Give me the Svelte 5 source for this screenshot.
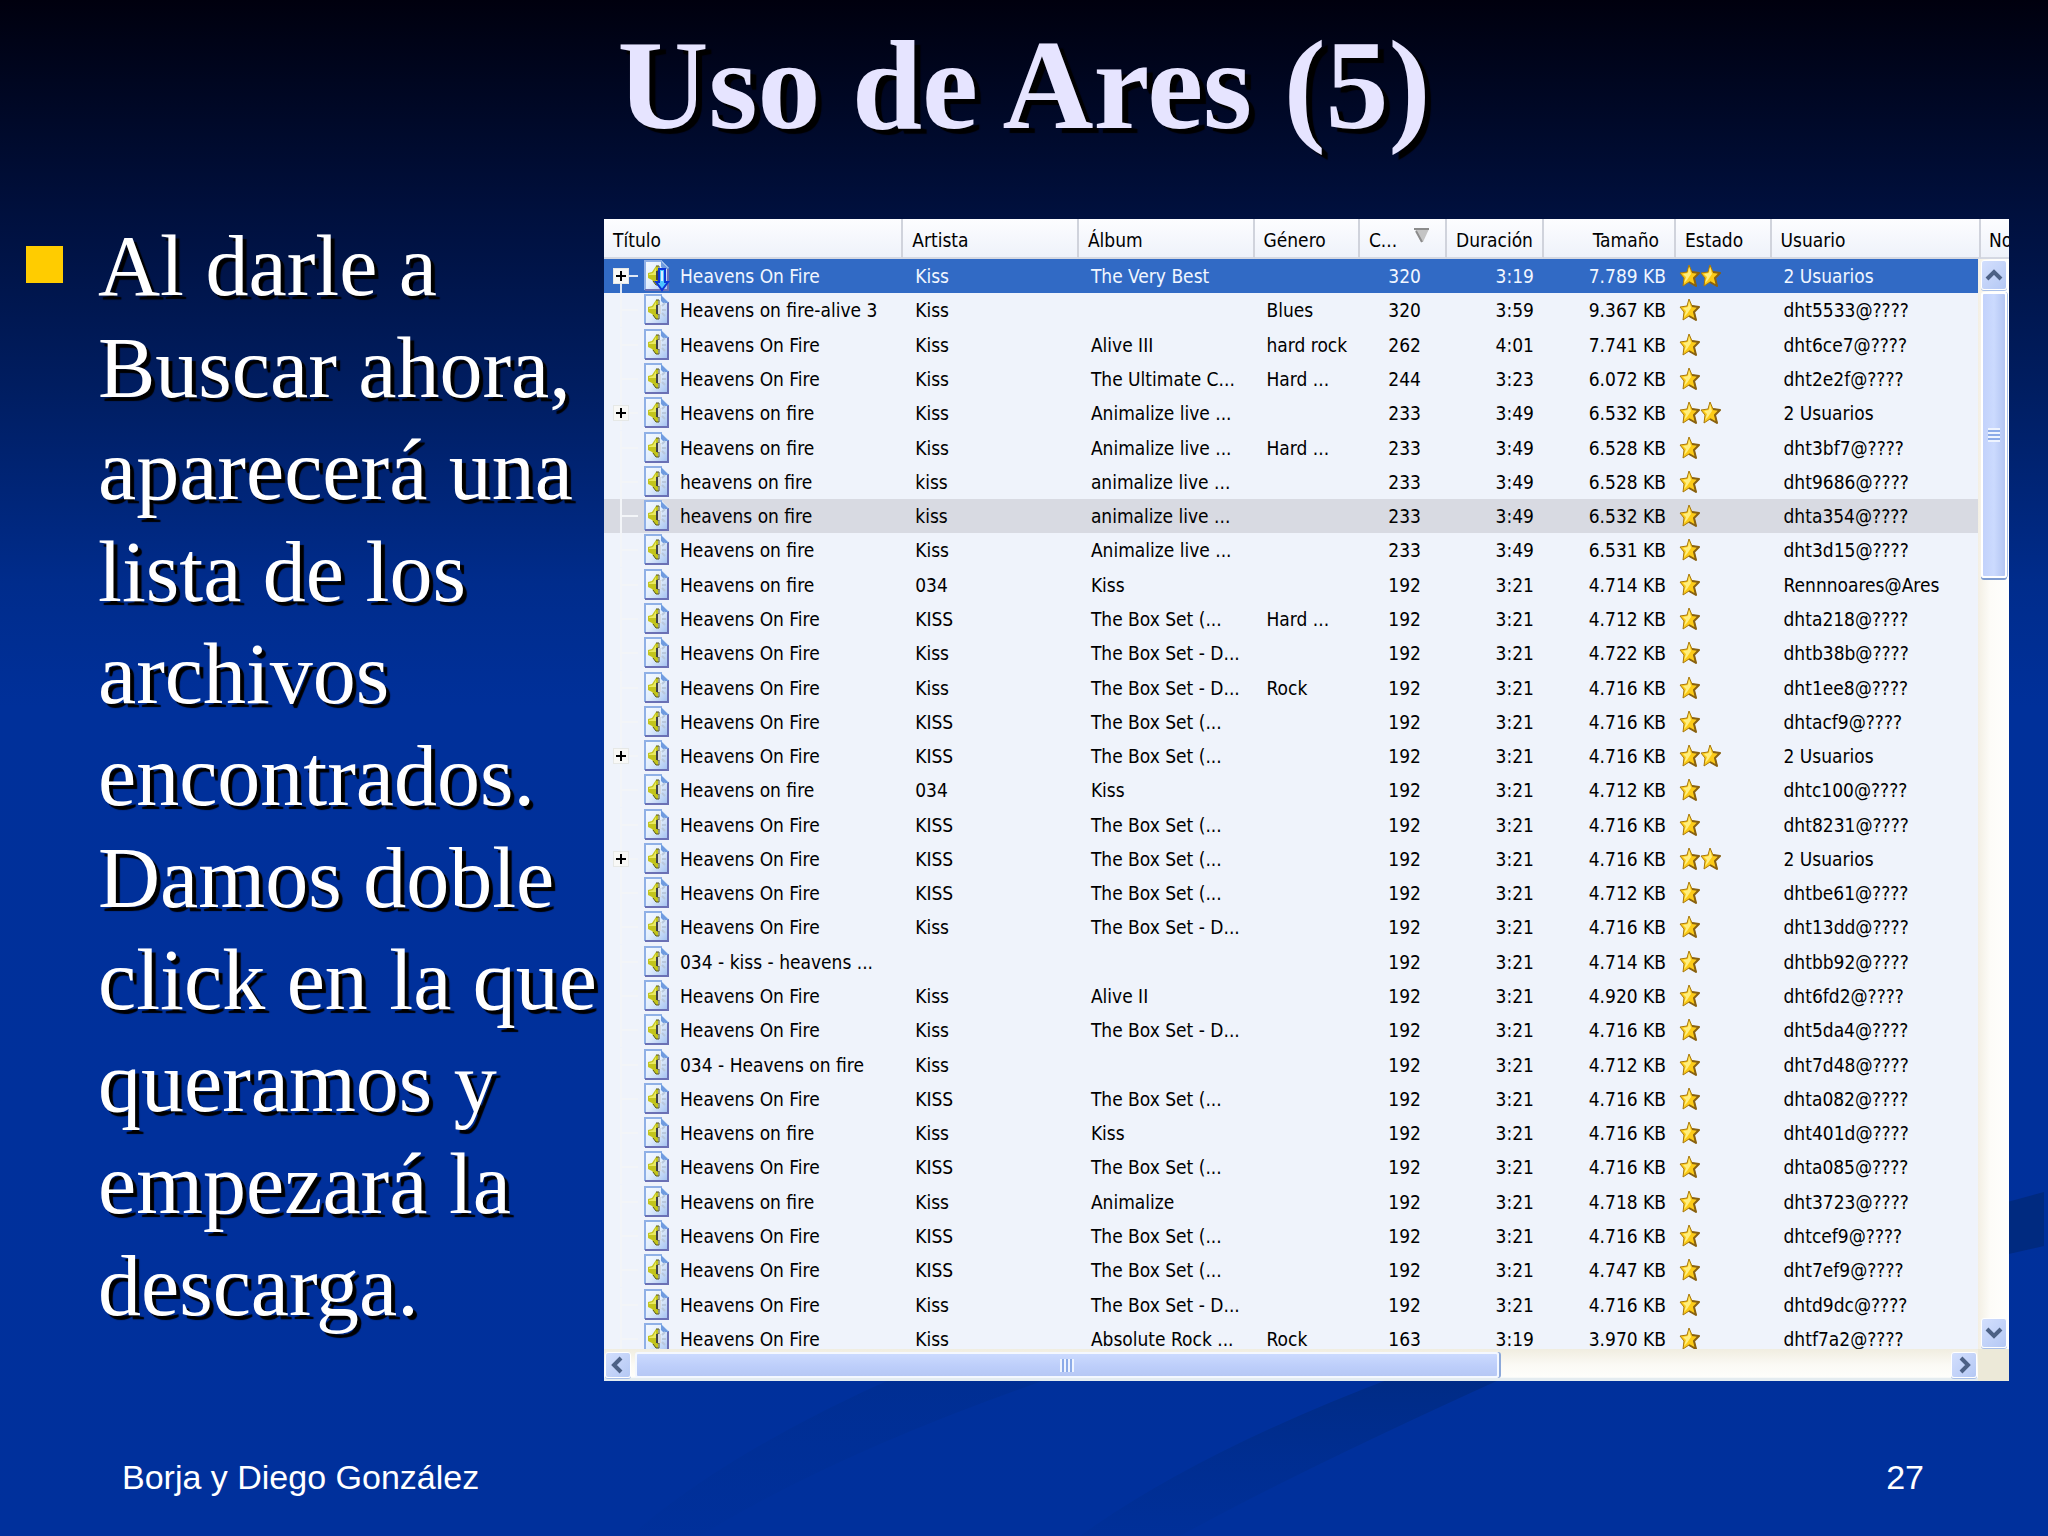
<script>
  const source = `+|Heavens On Fire|Kiss|The Very Best||320|3:19|7.789|2|2 Usuarios
|Heavens on fire-alive 3|Kiss||Blues|320|3:59|9.367|1|dht5533@????
|Heavens On Fire|Kiss|Alive III|hard rock|262|4:01|7.741|1|dht6ce7@????
|Heavens On Fire|Kiss|The Ultimate C...|Hard ...|244|3:23|6.072|1|dht2e2f@????
+|Heavens on fire|Kiss|Animalize live ...||233|3:49|6.532|2|2 Usuarios
|Heavens on fire|Kiss|Animalize live ...|Hard ...|233|3:49|6.528|1|dht3bf7@????
|heavens on fire|kiss|animalize live ...||233|3:49|6.528|1|dht9686@????
|heavens on fire|kiss|animalize live ...||233|3:49|6.532|1|dhta354@????
|Heavens on fire|Kiss|Animalize live ...||233|3:49|6.531|1|dht3d15@????
|Heavens on fire|034|Kiss||192|3:21|4.714|1|Rennnoares@Ares
|Heavens On Fire|KISS|The Box Set (...|Hard ...|192|3:21|4.712|1|dhta218@????
|Heavens On Fire|Kiss|The Box Set - D...||192|3:21|4.722|1|dhtb38b@????
|Heavens On Fire|Kiss|The Box Set - D...|Rock|192|3:21|4.716|1|dht1ee8@????
|Heavens On Fire|KISS|The Box Set (...||192|3:21|4.716|1|dhtacf9@????
+|Heavens On Fire|KISS|The Box Set (...||192|3:21|4.716|2|2 Usuarios
|Heavens on fire|034|Kiss||192|3:21|4.712|1|dhtc100@????
|Heavens On Fire|KISS|The Box Set (...||192|3:21|4.716|1|dht8231@????
+|Heavens On Fire|KISS|The Box Set (...||192|3:21|4.716|2|2 Usuarios
|Heavens On Fire|KISS|The Box Set (...||192|3:21|4.712|1|dhtbe61@????
|Heavens On Fire|Kiss|The Box Set - D...||192|3:21|4.716|1|dht13dd@????
|034 - kiss - heavens ...||||192|3:21|4.714|1|dhtbb92@????
|Heavens On Fire|Kiss|Alive II||192|3:21|4.920|1|dht6fd2@????
|Heavens On Fire|Kiss|The Box Set - D...||192|3:21|4.716|1|dht5da4@????
|034 - Heavens on fire|Kiss|||192|3:21|4.712|1|dht7d48@????
|Heavens On Fire|KISS|The Box Set (...||192|3:21|4.716|1|dhta082@????
|Heavens on fire|Kiss|Kiss||192|3:21|4.716|1|dht401d@????
|Heavens On Fire|KISS|The Box Set (...||192|3:21|4.716|1|dhta085@????
|Heavens on fire|Kiss|Animalize||192|3:21|4.718|1|dht3723@????
|Heavens On Fire|KISS|The Box Set (...||192|3:21|4.716|1|dhtcef9@????
|Heavens On Fire|KISS|The Box Set (...||192|3:21|4.747|1|dht7ef9@????
|Heavens On Fire|Kiss|The Box Set - D...||192|3:21|4.716|1|dhtd9dc@????
|Heavens On Fire|Kiss|Absolute Rock ...|Rock|163|3:19|3.970|1|dhtf7a2@????`;

  const rows = source.split('\n').map((line) => {
    const [node, title, artist, album, genre, quality, length, size, stars, user] = line.split('|');
    return { node, title, artist, album, genre, quality, length, size, stars: Number(stars), user };
  });
</script>

<main class="slide">
  <svg class="swoosh" viewBox="0 0 2048 1536" preserveAspectRatio="none" aria-hidden="true">
    <defs>
      <linearGradient id="fade" x1="0" y1="0" x2="0" y2="1">
        <stop offset="0" stop-color="#002a80" stop-opacity=".8" />
        <stop offset=".5" stop-color="#002a80" stop-opacity=".4" />
        <stop offset="1" stop-color="#002a80" stop-opacity=".1" />
      </linearGradient>
    </defs>
    <path d="M1400 1375 Q1200 1450 1080 1536 H1180 Q1300 1470 1510 1375 Z" fill="url(#fade)" />
    <path d="M900 1375 Q730 1450 630 1536 H700 Q840 1450 1060 1375 Z" fill="url(#fade)" opacity=".4" />
    <path d="M2000 1204 L2044 1192 V1246 L2000 1256 Z" fill="#002a80" />
  </svg>

  <h1>Uso de Ares (5)</h1>

  <div class="content">
    <ul class="points">
      <li>Al darle a Buscar ahora, aparecerá una lista de los archivos encontrados. Damos doble click en la que queramos y empezará la descarga.</li>
    </ul>

    <section class="panel" aria-label="Resultados">
      <div class="viewport">
        <table>
          <colgroup>
            <col class="w-title" /><col class="w-text" /><col class="w-text" /><col class="w-genre" />
            <col class="w-quality" /><col class="w-length" /><col class="w-size" /><col class="w-state" />
            <col /><col class="w-last" />
          </colgroup>
          <thead>
            <tr>
              <th>Título</th>
              <th>Artista</th>
              <th>Álbum</th>
              <th>Género</th>
              <th>
                <span class="sorted">C...
                  <svg width="16" height="16" viewBox="0 0 16 16" aria-hidden="true">
                    <path d="M1 1 H15 L9 14 H7 Z" fill="#c4c4c4" />
                    <path d="M0 1 H15 M2 3 L8 14" stroke="#8c8c8c" stroke-width="2" fill="none" />
                  </svg>
                </span>
              </th>
              <th>Duración</th>
              <th class="size">Tamaño</th>
              <th>Estado</th>
              <th>Usuario</th>
              <th>No</th>
            </tr>
          </thead>
          <tbody>
            {#each rows as row, i}
              <tr class:selected={i === 0} class:hovered={i === 7}>
                <td class="title">
                  <div class="entry">
                    <span class="tree">
                      {#if row.node}
                        <button class="expander" aria-label="Expandir">
                          <svg width="10" height="10" viewBox="0 0 10 10" aria-hidden="true">
                            <path d="M5 0 V10 M0 5 H10" stroke="#000" stroke-width="2" />
                          </svg>
                        </button>
                      {/if}
                    </span>
                    <svg class="file" width="26" height="32" viewBox="0 0 26 32" aria-hidden="true">
                      <defs>
                        <linearGradient id="page{i}" x1="0" y1="0" x2="1" y2="1">
                          <stop offset="0" stop-color="#f6faff" />
                          <stop offset=".5" stop-color="#e2eefc" />
                          <stop offset="1" stop-color="#9dbdf0" />
                        </linearGradient>
                      </defs>
                      <path d="M1 1 H18 L25 8 V30 H1 Z" fill="url(#page{i})" />
                      <path d="M1 30 V1 H18" stroke="#8fb0e6" stroke-width="2" fill="none" />
                      <path d="M24 8 V30 H1" stroke="#6a70b4" stroke-width="2" fill="none" />
                      <path d="M17 1 L25 9 H19 L17 7 Z" fill="#6f9be0" />
                      <path d="M4 13 L8 12 L12 6 H14 V25 H12 L8 20 L4 18 Z" fill="#c3c51c" />
                      <path d="M5 14 L9 13 L12 8 V15 H5 Z" fill="#e9ea62" />
                      <path d="M12 6 H15 V11 H13 V20 H15 V25 H12 L9 21" fill="none" stroke="#56571c" stroke-width="1" />
                      <path d="M12 11 H14 V20 H12 Z" fill="#3e4148" />
                      <path d="M14 11 H17 V20 H14 Z" fill="#d6d8de" />
                      <path d="M18 12 L21 9 M18 16 H22 M18 19 L21 22" stroke="#b9c8dc" stroke-width="2" />
                      {#if i === 0}
                        <path d="M15 9 H21 V22 H24 L18 30 L12 22 H15 Z" fill="#4cc2ff" stroke="#0b35d8" stroke-width="2" />
                        <path d="M17 11 H19 V21 H17 Z" fill="#d8ecff" />
                      {/if}
                    </svg>
                    <span>{row.title}</span>
                  </div>
                </td>
                <td>{row.artist}</td>
                <td>{row.album}</td>
                <td>{row.genre}</td>
                <td class="quality">{row.quality}</td>
                <td class="number">{row.length}</td>
                <td class="number">{row.size} KB</td>
                <td class="state">
                  <div class="stars">
                    {#each Array(row.stars) as _}
                      <svg width="21" height="24" viewBox="0 0 21 24" aria-hidden="true">
                        <path d="M10 1 L13 8 L20 9 L15 14 L17 22 L10 18 L4 22 L5 14 L1 9 L8 8 Z" fill="#fccb18" stroke="#a8780c" stroke-width="1" stroke-linejoin="round" />
                        <path d="M10 3 L12 10 L8 16 L5 19 L7 13 L4 10 L9 9 Z" fill="#ffee80" />
                        <path d="M13 8 L20 9 L15 14 L17 22 L10 18" fill="none" stroke="#8a6210" stroke-width="2" stroke-linejoin="round" />
                      </svg>
                    {/each}
                  </div>
                </td>
                <td>{row.user}</td>
                <td></td>
              </tr>
            {/each}
          </tbody>
        </table>
      </div>

      <div class="vbar">
        <button class="arrow" aria-label="Subir">
          <svg width="18" height="14" viewBox="0 0 18 14" aria-hidden="true"><path d="M2 11 L9 4 L16 11" fill="none" stroke="#4d6185" stroke-width="4" /></svg>
        </button>
        <div class="vthumb"><span class="grip"></span></div>
        <button class="arrow down" aria-label="Bajar">
          <svg width="18" height="14" viewBox="0 0 18 14" aria-hidden="true"><path d="M2 3 L9 10 L16 3" fill="none" stroke="#4d6185" stroke-width="4" /></svg>
        </button>
      </div>

      <div class="hbar">
        <button class="arrow" aria-label="Izquierda">
          <svg width="14" height="18" viewBox="0 0 14 18" aria-hidden="true"><path d="M10 2 L3 9 L10 16" fill="none" stroke="#4d6185" stroke-width="4" /></svg>
        </button>
        <div class="hthumb"><span class="grip"></span></div>
        <button class="arrow right" aria-label="Derecha">
          <svg width="14" height="18" viewBox="0 0 14 18" aria-hidden="true"><path d="M4 2 L11 9 L4 16" fill="none" stroke="#4d6185" stroke-width="4" /></svg>
        </button>
      </div>
      <div class="corner"></div>
    </section>
  </div>

  <footer>
    <span>Borja y Diego González</span>
    <span>27</span>
  </footer>
</main>

<style>
  :global(body) {
    margin: 0;
    background: #00309c;
  }
  .slide {
    position: relative;
    box-sizing: border-box;
    min-height: 100vh;
    display: flex;
    flex-direction: column;
    background: linear-gradient(180deg, #00000e 0%, #00103e 14%, #001d60 25%, #002c8c 38%, #00309a 46%, #00309c 100%);
    color: #fff;
  }
  .swoosh {
    position: absolute;
    inset: 0;
    width: 100%;
    height: 100%;
  }
  h1 {
    position: relative;
    margin: 0;
    text-align: center;
    font: bold 126px/172px 'Liberation Serif', serif;
    color: #e6e4ff;
    text-shadow: 6px 5px 1px #000;
  }
  .content {
    position: relative;
    display: grid;
    grid-template-columns: 604px 1fr;
    padding: 43px 39px 0 0;
  }
  .points {
    margin: 0;
    padding: 0;
    list-style: none;
  }
  .points li {
    display: grid;
    grid-template-columns: 37px 1fr;
    column-gap: 35px;
    padding-left: 26px;
    font: 86px/102px 'Liberation Serif', serif;
    text-shadow: 4px 4px 1px #000;
  }
  .points li::before {
    content: '';
    height: 37px;
    margin-top: 31px;
    background: #fc0;
  }
  .panel {
    display: grid;
    grid-template-columns: 1fr 31px;
    grid-template-rows: 1130px 32px;
    margin-top: 4px;
    align-self: start;
    background: #eff3fb;
    color: #000;
    font: 19px/24px 'DejaVu Sans Condensed', 'DejaVu Sans', sans-serif;
  }
  .viewport {
    grid-area: 1 / 1 / 2 / 3;
    overflow: hidden;
  }
  table {
    width: 100%;
    height: 1137px;
    table-layout: fixed;
    border-spacing: 0;
  }
  .w-title { width: 21.3%; }
  .w-text { width: 12.5%; }
  .w-genre { width: 7.5%; }
  .w-quality { width: 6.2%; }
  .w-length { width: 6.9%; }
  .w-size { width: 9.4%; }
  .w-state { width: 6.8%; }
  .w-last { width: 28px; }
  th {
    box-sizing: border-box;
    height: 40px;
    padding: 4px 0 0 9px;
    font-weight: normal;
    text-align: left;
    white-space: nowrap;
    overflow: hidden;
    background: linear-gradient(180deg, #fdfdff, #eef2fa);
    border-bottom: 2px solid #d4d8e2;
    border-right: 2px solid #d0d3dc;
  }
  th:last-child {
    border-right: 0;
    padding-left: 8px;
  }
  th.size {
    text-align: right;
    padding-right: 15px;
  }
  .sorted {
    display: flex;
    justify-content: space-between;
    padding-right: 15px;
  }
  td {
    padding: 0 0 0 12px;
    white-space: nowrap;
    overflow: hidden;
  }
  td.title {
    padding-left: 9px;
  }
  td.quality {
    padding-right: 26px;
    text-align: right;
  }
  td.number {
    padding-right: 10px;
    text-align: right;
  }
  td.state {
    padding-left: 3px;
  }
  .selected td:not(:last-child) {
    background: #316ac5;
    color: #f0f6ff;
  }
  .hovered td:not(:last-child) {
    background: #d8dae2;
  }
  .entry {
    display: flex;
    align-items: center;
    height: 34px;
  }
  .tree {
    display: flex;
    align-items: center;
    align-self: stretch;
    width: 31px;
    background: linear-gradient(#f3f5f8, #f3f5f8) 7px 0 / 2px 100% no-repeat, linear-gradient(#f3f5f8, #f3f5f8) 8px 50% / 17px 2px no-repeat;
  }
  .selected .tree {
    background: linear-gradient(#dfe8f6, #dfe8f6) 7px 100% / 2px 50% no-repeat, linear-gradient(#dfe8f6, #dfe8f6) 8px 50% / 17px 2px no-repeat;
  }
  .expander {
    display: grid;
    place-items: center;
    width: 16px;
    height: 16px;
    padding: 0;
    border: 1px solid #e6e8e6;
    background: #f8f8f6;
  }
  .file {
    margin-right: 10px;
  }
  .stars {
    display: flex;
  }
  .vbar {
    grid-area: 1 / 2 / 2 / 3;
    display: flex;
    flex-direction: column;
    margin-top: 40px;
    padding: 1px 2px 1px 3px;
    background: linear-gradient(90deg, #f3efe4, #fdfcf8 40%, #fffffd);
  }
  .arrow {
    display: grid;
    place-items: center;
    box-sizing: border-box;
    width: 26px;
    height: 30px;
    padding: 0;
    border: 1px solid #fff;
    border-radius: 3px;
    background: linear-gradient(135deg, #d3dffd, #b4c8f4);
    box-shadow: 0 1px 0 #a8bfe8;
  }
  .down {
    margin-top: auto;
  }
  .vthumb {
    display: grid;
    place-items: center;
    box-sizing: border-box;
    height: 286px;
    margin-top: 2px;
    border: 2px solid #fff;
    border-radius: 3px;
    background: linear-gradient(90deg, #c3d2fb, #cbdafe 50%, #b3c5f2);
    box-shadow: 0 2px 0 #7d9bd0, 1px 0 0 #a8bfe8;
  }
  .vthumb .grip {
    width: 12px;
    height: 14px;
    background: repeating-linear-gradient(180deg, #eef4ff 0 2px, #8cabe8 2px 4px);
  }
  .hbar {
    display: flex;
    align-items: center;
    padding: 0 1px;
    background: linear-gradient(180deg, #f0ede0, #fbfaf5 50%, #fefefb 88%, #e4ecf0 92%);
  }
  .hbar .arrow {
    height: 26px;
  }
  .hthumb {
    display: grid;
    place-items: center;
    box-sizing: border-box;
    width: 63%;
    height: 26px;
    margin-left: 4px;
    border: 2px solid #f4f8ff;
    border-radius: 3px;
    background: linear-gradient(180deg, #cbdafe, #bccdfa 60%, #b6c8f4);
    box-shadow: 2px 0 0 #8da9da;
  }
  .hthumb .grip {
    width: 14px;
    height: 13px;
    background: repeating-linear-gradient(90deg, #eef4ff 0 2px, #8cabe8 2px 4px);
  }
  .right {
    margin-left: auto;
  }
  .corner {
    background: #ece9d8;
  }
  footer {
    position: relative;
    display: flex;
    justify-content: space-between;
    padding: 76px 124px 39px 122px;
    font: 34px/40px 'Liberation Sans', sans-serif;
  }
</style>
